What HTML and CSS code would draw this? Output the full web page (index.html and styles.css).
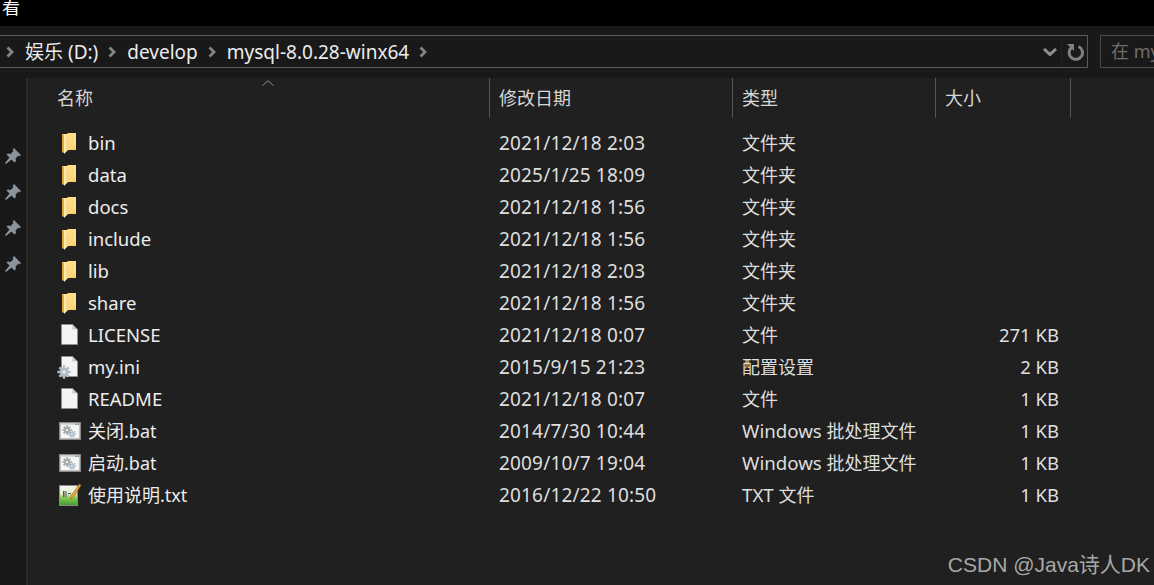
FILE: index.html
```html
<!DOCTYPE html>
<html lang="zh">
<head>
<meta charset="utf-8">
<title>mysql-8.0.28-winx64</title>
<link rel="stylesheet" href="styles.css">
</head>
<body>
<svg class="defs" width="0" height="0" aria-hidden="true">
  <defs>
    <linearGradient id="fold" x1="0" y1="0" x2="1" y2="1"><stop offset="0" stop-color="#ffe596"/><stop offset="1" stop-color="#f8cf6c"/></linearGradient>
    <linearGradient id="flap" x1="0" y1="0" x2="1" y2="0"><stop offset="0" stop-color="#fff0b8"/><stop offset="1" stop-color="#f6d27a"/></linearGradient>
    <linearGradient id="txtg" x1="0" y1="0" x2="0" y2="1"><stop offset="0" stop-color="#f6f6f0"/><stop offset=".4" stop-color="#e4efd2"/><stop offset=".62" stop-color="#88c850"/><stop offset="1" stop-color="#3f9a2c"/></linearGradient>
    <symbol id="i-folder" viewBox="0 0 26 24" width="26" height="24">
      <path d="M6 3h5l1-1h8v17h-8l-3 2.500-3-.5z" fill="url(#fold)"/>
      <path d="M6 3v18l2 1V4z" fill="#dca83f"/>
      <path d="M8 4l3.500 2v13.500L8 23z" fill="url(#flap)"/>
      <path d="M17 2h3v12h-3z" fill="#fde08e"/>
    </symbol>
    <symbol id="i-file" viewBox="0 0 26 24" width="26" height="24">
      <path d="M5.500 1.500h11l5 5v15h-16z" fill="#f4f4f4" stroke="#8e8e8e"/>
      <path d="M16.500 1.500v5h5z" fill="#c4c4c4"/>
    </symbol>
    <symbol id="i-gear" viewBox="0 0 12 12">
      <path d="M6 .3v11.400M.3 6h11.400M2 2l8 8M10 2l-8 8" stroke="currentColor" stroke-width="2"/>
      <circle cx="6" cy="6" r="3.400" fill="currentColor"/>
      <circle cx="6" cy="6" r="1.500" fill="#e9e9e9"/>
    </symbol>
    <symbol id="i-pin" viewBox="0 0 18 18">
      <path d="M10 1l7 7-1.500 1.500-1-1-3 3 .5 2.500L10.500 15.500l-3-3L2 17l-1-1 4.500-5.500-3-3L4 6.500l2.500.5 3-3-1-1z" fill="#8a949c"/>
    </symbol>
    <symbol id="i-bat" viewBox="0 0 26 24" width="26" height="24">
      <rect x="3.750" y="3.750" width="20.500" height="16.500" fill="#f6f6f6" stroke="#8a8a8a" stroke-width="1.500"/>
      <path d="M4.500 4.500h19v1.500h-19z" fill="#d8d8d8"/>
      <path d="M19 4.500h1.500V6H19zM21.500 4.500H23V6h-1.500z" fill="#8f8f8f"/>
      <use href="#i-gear" class="gear-dark" x="6" y="6" width="10" height="10"/>
      <use href="#i-gear" class="gear-blue" x="12" y="11" width="8" height="8"/>
    </symbol>
  </defs>
</svg>

<header class="titlebar"><span class="tab-text">看</span></header>

<div class="toolbar">
  <div class="address">
    <div class="crumbs">
      <svg class="chev" viewBox="0 0 8 12"><path d="M1.500 1.500L6 6l-4.500 4.500" /></svg>
      <span>娱乐 (D:)</span>
      <svg class="chev" viewBox="0 0 8 12"><path d="M1.500 1.500L6 6l-4.500 4.500" /></svg>
      <span>develop</span>
      <svg class="chev" viewBox="0 0 8 12"><path d="M1.500 1.500L6 6l-4.500 4.500" /></svg>
      <span>mysql-8.0.28-winx64</span>
      <svg class="chev" viewBox="0 0 8 12"><path d="M1.500 1.500L6 6l-4.500 4.500" /></svg>
    </div>
    <svg class="down" viewBox="0 0 14 8"><path d="M1 1l6 5.500L13 1"/></svg>
    <div class="refresh">
      <svg viewBox="0 0 18 18"><path d="M5.500 4.500A6.700 6.700 0 1 0 12.500 3.500"/><path class="fill" d="M1 1h7v7z"/></svg>
    </div>
  </div>
  <div class="search">在 my</div>
</div>

<main class="content">
  <nav class="quick">
    <svg class="pin"><use href="#i-pin"/></svg>
    <svg class="pin"><use href="#i-pin"/></svg>
    <svg class="pin"><use href="#i-pin"/></svg>
    <svg class="pin"><use href="#i-pin"/></svg>
  </nav>
  <section class="list">
    <div class="head">
      <div class="hcell name">名称<svg class="caret" viewBox="0 0 12 6"><path d="M.5 5.500L6 .7l5.500 4.800"/></svg></div>
      <div class="hcell">修改日期</div>
      <div class="hcell">类型</div>
      <div class="hcell">大小</div>
    </div>
    <div class="rows">
      <div class="row"><div class="fname"><svg class="ico"><use href="#i-folder"/></svg>bin</div><div class="date">2021/12/18 2:03</div><div>文件夹</div><div class="size"></div></div>
      <div class="row"><div class="fname"><svg class="ico"><use href="#i-folder"/></svg>data</div><div class="date">2025/1/25 18:09</div><div>文件夹</div><div class="size"></div></div>
      <div class="row"><div class="fname"><svg class="ico"><use href="#i-folder"/></svg>docs</div><div class="date">2021/12/18 1:56</div><div>文件夹</div><div class="size"></div></div>
      <div class="row"><div class="fname"><svg class="ico"><use href="#i-folder"/></svg>include</div><div class="date">2021/12/18 1:56</div><div>文件夹</div><div class="size"></div></div>
      <div class="row"><div class="fname"><svg class="ico"><use href="#i-folder"/></svg>lib</div><div class="date">2021/12/18 2:03</div><div>文件夹</div><div class="size"></div></div>
      <div class="row"><div class="fname"><svg class="ico"><use href="#i-folder"/></svg>share</div><div class="date">2021/12/18 1:56</div><div>文件夹</div><div class="size"></div></div>
      <div class="row"><div class="fname"><svg class="ico"><use href="#i-file"/></svg>LICENSE</div><div class="date">2021/12/18 0:07</div><div>文件</div><div class="size">271 KB</div></div>
      <div class="row"><div class="fname"><svg class="ico" viewBox="0 0 26 24"><use href="#i-file"/><use href="#i-gear" class="gear" x="1" y="10" width="14" height="14"/></svg>my.ini</div><div class="date">2015/9/15 21:23</div><div>配置设置</div><div class="size">2 KB</div></div>
      <div class="row"><div class="fname"><svg class="ico"><use href="#i-file"/></svg>README</div><div class="date">2021/12/18 0:07</div><div>文件</div><div class="size">1 KB</div></div>
      <div class="row"><div class="fname cjk"><svg class="ico"><use href="#i-bat"/></svg>关闭.bat</div><div class="date">2014/7/30 10:44</div><div><span class="lat">Windows</span> 批处理文件</div><div class="size">1 KB</div></div>
      <div class="row"><div class="fname cjk"><svg class="ico"><use href="#i-bat"/></svg>启动.bat</div><div class="date">2009/10/7 19:04</div><div><span class="lat">Windows</span> 批处理文件</div><div class="size">1 KB</div></div>
      <div class="row"><div class="fname cjk"><svg class="ico" viewBox="0 0 26 24"><rect x="3.500" y="2.500" width="18" height="20" fill="url(#txtg)" stroke="#8a8a8a"/><path d="M7 8h1.500v6H7zM9.500 8h1v6h-1zM12 10h3v1h-3z" fill="#555"/><path d="M23.500 1l1.500 1.200-7.500 12-3 2 .5-3.500z" fill="#e9a93a" stroke="#8a5a1a" stroke-width=".5"/></svg>使用说明.txt</div><div class="date">2016/12/22 10:50</div><div><span class="lat">TXT</span> 文件</div><div class="size">1 KB</div></div>
    </div>
  </section>
  <div class="watermark">CSDN @Java诗人DK</div>
</main>
</body>
</html>
```
FILE: styles.css
```css
* { box-sizing: border-box; }
html, body { height: 100%; }
body {
  margin: 0;
  overflow: hidden;
  display: flex;
  flex-direction: column;
  background: #202020;
  color: #e6e6e6;
  font-family: "Noto Sans", "Noto Sans CJK SC", sans-serif;
  font-size: 18px;
}
.defs { position: absolute; }

.titlebar {
  flex: 0 0 26px;
  background: #000;
  color: #fff;
  overflow: hidden;
  line-height: 18px;
}
.tab-text { display: block; margin: -2px 0 0 2px; }

.toolbar {
  flex: 0 0 52px;
  background: #191919;
  display: flex;
  align-items: flex-start;
  padding-top: 9px;
}
.address {
  flex: 0 0 1089px;
  height: 33px;
  margin-left: -1px;
  border: 1px solid #5a5a5a;
  display: flex;
  align-items: center;
}
.crumbs {
  flex: 1;
  display: flex;
  align-items: center;
  padding-left: 6px;
  color: #ececec;
  font-size: 19px;
}
.crumbs span { line-height: 30px; }
.chev { width: 8px; height: 12px; margin-right: 11px; flex: none; }
.crumbs span + .chev { margin-left: 10px; }
.chev path { fill: none; stroke: #858585; stroke-width: 2.800; }
.down { width: 14px; height: 8px; margin: 1px 4px 0 0; flex: none; }
.down path { fill: none; stroke: #8f8f8f; stroke-width: 3; }
.refresh {
  flex: 0 0 26px;
  height: 100%;
  border-left: 1px solid #222;
  display: flex;
  align-items: center;
  justify-content: center;
}
.refresh svg { width: 18px; height: 18px; margin-top: 1px; }
.refresh path { fill: none; stroke: #808080; stroke-width: 3; }
.refresh path.fill { fill: #808080; stroke: none; }
.search {
  flex: 1;
  height: 33px;
  margin-left: 12px;
  border: 1px solid #4a4a4a;
  border-right: 0;
  padding-left: 10px;
  line-height: 30px;
  color: #6f6f6f;
  white-space: nowrap;
  overflow: hidden;
}

.content { flex: 1; display: flex; position: relative; min-height: 0; }
.quick {
  flex: 0 0 26px;
  background: #191919;
  display: flex;
  flex-direction: column;
  align-items: center;
  padding-top: 69px;
  gap: 18px;
}
.pin { width: 18px; height: 18px; flex: none; }
.list {
  flex: 1;
  border-left: 2px solid #2b2b2b;
  background: #202020;
}
.head, .row { display: grid; }
.head {
  grid-template-columns: 462px 243px 203px 135px;
  grid-template-rows: 40px;
  height: 40px;
  margin-bottom: 9px;
}
.row { grid-template-columns: 461px 243px 203px 135px; }
.hcell {
  border-right: 1px solid #555;
  padding-left: 9px;
  line-height: 41px;
  color: #d6d6d6;
}
.hcell.name { padding-left: 29px; position: relative; }
.caret {
  position: absolute;
  left: 234px;
  top: 2px;
  width: 12px;
  height: 6px;
}
.caret path { fill: none; stroke: #8d8d8d; stroke-width: 1; }
.row { height: 32px; line-height: 32px; white-space: nowrap; color: #dedede; }
.row > div { padding-left: 10px; }
.row > .fname { padding-left: 60px; position: relative; color: #ececec; font-size: 18.500px; }
.row > .fname.cjk { font-size: 18px; }
.row > .date { font-size: 19px; letter-spacing: .17px; }
.row > .size { padding: 0 11px 0 0; text-align: right; font-size: 18.500px; }
.lat { font-size: 18.700px; }
.ico {
  position: absolute;
  left: 28px;
  top: 4px;
  width: 26px;
  height: 24px;
  overflow: visible;
}
.gear { color: #b4bcc1; }
.gear-dark { color: #a2a6a8; }
.gear-blue { color: #a9bccb; }
.watermark {
  position: absolute;
  right: 4px;
  bottom: 8px;
  font-family: "Liberation Sans", "Noto Sans CJK SC", sans-serif;
  font-size: 21px;
  line-height: 24px;
  color: #a8a8a8;
}
```
